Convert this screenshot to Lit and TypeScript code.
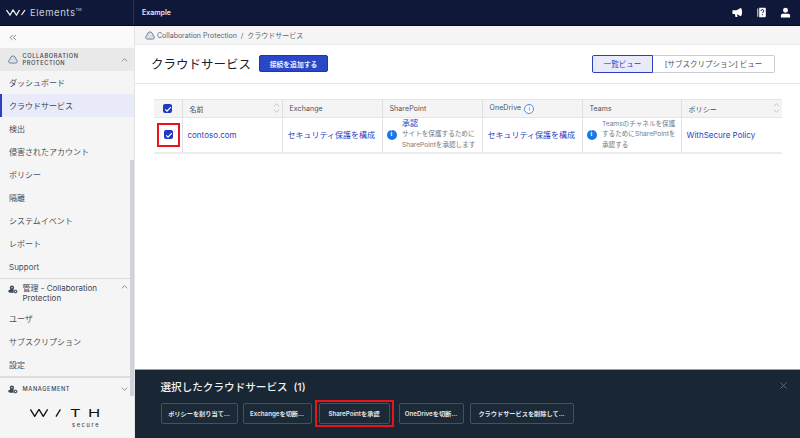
import { LitElement, html, css } from "lit";
import { customElement } from "lit/decorators.js";

const cloud = (w = 10, h = 9) => html`<svg class="ic" viewBox="0 0 14 12" width=${w} height=${h}><path d="M3.400 11C1.800 11 .8 10 .8 8.600c0-1.300.8-2.200 1.900-2.400C3 3 4.800 1 7 1c2.300 0 4 2 4.300 5.200 1.100.2 1.900 1.100 1.900 2.400C13.200 10 12.200 11 10.600 11Z" fill="#d9deec" stroke="#5b6472" stroke-width="1.100"/></svg>`;
const gearCloud = html`<svg class="ic" viewBox="0 0 14 12" width="10" height="9"><circle cx="5.500" cy="3.500" r="3" fill="#3f4956"/><circle cx="5.500" cy="3.500" r="1" fill="#f5f5f5"/><path d="M3 10.500c-1.500 0-2.600-.8-2.600-2 0-1 .8-1.800 1.800-1.800.5-1.500 1.700-2.200 3-2.200 1.600 0 2.800 1 3 2.500 1.500 0 2.700.7 2.700 1.900s-1 1.600-2.200 1.600Z" fill="#3f4956"/><circle cx="10.500" cy="8.700" r="2.800" fill="#3f4956" stroke="#f5f5f5" stroke-width=".6"/><circle cx="10.500" cy="8.700" r=".9" fill="#f5f5f5"/></svg>`;
const chevUp = html`<svg viewBox="0 0 10 6" width="7" height="4"><path d="M1 5l4-4 4 4" fill="none" stroke="#5b6472" stroke-width="1"/></svg>`;
const chevDown = html`<svg viewBox="0 0 10 6" width="7" height="4"><path d="M1 1l4 4 4-4" fill="none" stroke="#5b6472" stroke-width="1"/></svg>`;
const topMark = html`<svg viewBox="0 0 40 14" width="20" height="7"><path d="M1 2l7 10 6-10 7 10 6-10M31 12l7-10" fill="none" stroke="#f0f1f5" stroke-width="2.600"/></svg>`;
const logoMark = html`<svg viewBox="0 0 31 8" width="31" height="8"><path d="M.4 .4l4.300 7 4.300-7 4.300 7 4.300-7M26 7.600l4.400-7.200" fill="none" stroke="#111" stroke-width="1.300"/></svg>`;
const check = html`<span class="cb"><svg viewBox="0 0 10 10" width="8" height="8"><path d="M1.500 5.500l2.300 2.200 4.700-5" fill="none" stroke="#fff" stroke-width="1.600"/></svg></span>`;
const info = html`<span class="info">i</span>`;
const sort = html`<span class="sort"><svg viewBox="0 0 8 4" width="7" height="4"><path d="M1 3.500l3-3 3 3" fill="none" stroke="#b5bac2" stroke-width=".9"/></svg><svg viewBox="0 0 8 4" width="7" height="4"><path d="M1 .5l3 3 3-3" fill="none" stroke="#b5bac2" stroke-width=".9"/></svg></span>`;

const items1 = ["ダッシュボード", "クラウドサービス", "検出", "侵害されたアカウント", "ポリシー", "隔離", "システムイベント", "レポート", "Support"];
const items2 = ["ユーザ", "サブスクリプション", "設定"];
const actions = ["ポリシーを割り当て...", "Exchangeを切断...", "SharePointを承認", "OneDriveを切断...", "クラウドサービスを削除して..."];

@customElement("app-root")
export class AppRoot extends LitElement {
  static styles = css`
    :host { display: grid; grid-template-rows: 26px 412px; width: 800px; height: 438px; overflow: hidden;
      font-family: Inter, "Noto Sans CJK JP", sans-serif; color: #3c4450; background: #fff; }
    * { box-sizing: border-box; }
    .top { display: flex; align-items: center; background: #10183a; border-bottom: 1px solid #060a1c; color: #e8eaf0; }
    .brand { width: 134px; height: 25px; display: flex; align-items: center; gap: 4px; padding-left: 6px; border-right: 1px solid #283256; font-size: 9.500px; letter-spacing: .55px; color: #c9cdd8; }
    .brand sup { font-size: 4px; margin-left: -4px; align-self: flex-start; margin-top: 7px; letter-spacing: 0; }
    .example { padding-left: 8px; font-size: 7px; font-weight: 600; flex: 1; }
    .topicons { display: flex; gap: 13px; align-items: center; padding-right: 9px; }
    .body { display: grid; grid-template-columns: 135px 1fr; min-height: 0; }
    .side { position: relative; background: #f5f5f5; border-right: 1px solid #e3e4e6; display: flex; flex-direction: column; overflow: hidden; }
    .scroll { position: absolute; right: 0; top: 134px; width: 4px; height: 236px; background: #cfd3d8; }
    .collapse { height: 22px; flex: none; display: flex; align-items: center; padding-left: 9px; background: #fafafa; }
    .ghead { display: flex; gap: 4.500px; align-items: center; padding: 0 6px 0 8px; background: #e9e9e9; height: 23px; flex: none; font-size: 5.700px; font-weight: 500; letter-spacing: .6px; line-height: 6.500px; color: #3c4450; }
    .ghead .lbl { flex: 1; }
    .ghead.plain { background: transparent; }
    .ghead.admin { height: 29px; font-size: 8px; letter-spacing: 0; line-height: 10px; font-weight: 400; border-top: 1px solid #d9dadc; align-items: flex-start; padding-top: 4px; }
    .ghead.admin svg { margin-top: 2px; }
    .ghead.mg { height: 24px; border-top: 2px solid #dcdddf; }
    .item { height: 23px; flex: none; display: flex; align-items: center; padding-left: 9px; font-size: 8px; color: #4a515c; }
    .item.on { background: #e9ebfb; border-left: 2px solid #2b3fbf; padding-left: 7px; color: #3c4450; }
    .logo { margin-top: 7px; padding: 0 0 0 30px; }
    .logo .row { display: flex; align-items: center; font-size: 11px; color: #111; line-height: 12px; font-weight: 400; }
    .logo .t, .logo .h { display: inline-block; transform: scaleX(1.5); transform-origin: left center; }
    .logo .t { margin-left: 9px; width: 18px; }
    .logo .sec { margin: 2px 0 0 42px; font-size: 5.500px; letter-spacing: 1.700px; color: #444; line-height: 8px; font-weight: 500; }
    .main { display: flex; flex-direction: column; min-width: 0; }
    .crumb { height: 19px; flex: none; background: #f5f5f5; border-bottom: 1px solid #ebebeb; display: flex; align-items: center; gap: 2px; padding-left: 10px; font-size: 7px; color: #5b6472; }
    .head { height: 39px; flex: none; display: flex; align-items: center; padding: 0 25px 1px 16px; border-bottom: 1px solid #e6e6e6; }
    h1 { margin: 0; font-size: 12.500px; font-weight: 400; color: #1b2029; white-space: nowrap; }
    .add { margin-left: 8px; height: 17px; width: 69px; border: 1px solid #1f34b0; border-radius: 2px; background: #2a47c8; color: #e9ecfb; font: 600 6.800px Inter, "Noto Sans CJK JP", sans-serif; padding: 0; }
    .seg { margin-left: auto; display: flex; height: 18px; font-size: 7.500px; }
    .seg span { display: flex; align-items: center; justify-content: center; }
    .seg .a { width: 61px; background: #e9ebfb; border: 1px solid #2b3fbf; border-radius: 2px 0 0 2px; color: #2b3fbf; }
    .seg .b { width: 122px; border: 1px solid #c9ccd2; border-left: none; border-radius: 0 2px 2px 0; color: #4a515c; }
    table { margin: 15px 0 0 19px; width: 628px; border-collapse: collapse; table-layout: fixed; font-size: 7.500px; }
    th { height: 18px; background: #f4f4f4; border-top: 1px solid #e6e6e6; border-bottom: 1px solid #e6e6e6; border-left: 1px solid #dfe0e3; font-weight: 400; text-align: left; padding: 0 7px; color: #4a515c; position: relative; font-size: 7px; letter-spacing: .1px; }
    th:first-child, td:first-child { border-left: none; padding: 0; text-align: center; }
    td { height: 35px; border-bottom: 2px solid #ececec; border-left: 1px solid #e1e2e5; padding: 0 5px; vertical-align: middle; }
    .lnk { color: #2b3fbf; font-size: 8px; }
    .sort { position: absolute; right: 2px; top: 3px; display: flex; flex-direction: column; gap: 2px; }
    .cb { display: inline-flex; width: 9px; height: 9px; background: #2039c2; border-radius: 2px; align-items: center; justify-content: center; vertical-align: middle; }
    .red { display: inline-flex; width: 23px; height: 24px; margin-left: 2px; align-items: center; justify-content: center; border: 2px solid #e8141c; }
    .info { display: inline-flex; flex: none; width: 10px; height: 10px; border-radius: 50%; background: #1976e6; color: #fff; font-size: 6.500px; font-weight: 700; align-items: center; justify-content: center; }
    .info.o { background: #fff; border: 1px solid #4a90e2; color: #4a90e2; margin-left: 3px; width: 10px; height: 10px; font-weight: 500; vertical-align: -1.500px; }
    .note { display: flex; align-items: center; gap: 5.500px; margin-left: -1px; font-size: 6.600px; line-height: 10.800px; color: #757b85; }
    .note .lnk { display: block; font-size: 8px; line-height: 11px; }
    .spacer { flex: 1; }
    .panel { height: 69px; flex: none; background: #192633; border-top: 1px solid #9a9fa5; padding: 10px 9px 0 25.500px; position: relative; color: #f0f2f5; }
    .panel h2 { margin: 0 0 8px; font-size: 10.600px; font-weight: 500; line-height: 15px; word-spacing: 3px; }
    .close { position: absolute; right: 13px; top: 12px; }
    .btns { display: flex; gap: 5px; }
    .btn { height: 21px; flex: none; display: flex; align-items: center; justify-content: center; border: 1px solid #405264; border-radius: 2px; font-size: 6.200px; font-weight: 600; color: #e4e7eb; white-space: nowrap; background: #1c2a37; }
    .btn:nth-child(1) { width: 77px; }
    .btn:nth-child(2) { width: 69px; }
    .btn:nth-child(3) { width: 71px; margin: 0 4px 0 2px; position: relative; }
    .btn:nth-child(4) { width: 65px; }
    .btn:nth-child(5) { width: 104px; margin-left: 1px; }
    .btn:nth-child(3)::after { content: ""; position: absolute; inset: -4px -5px -4px -5px; border: 2.500px solid #e8141c; pointer-events: none; }
  `;
  render() {
    return html`
      <div class="top">
        <div class="brand">${topMark}<span>Elements</span><sup>TM</sup></div>
        <div class="example">Example</div>
        <div class="topicons">
          <svg viewBox="0 0 12 12" width="11" height="11"><path d="M.5 3.500h4.500L9.500 1c.8 0 1.500 2 1.500 4.500S10.300 10 9.500 10L5.500 7.800l.5 3H3.800L3.200 7.500H.5Z" fill="#fff"/></svg>
          <svg viewBox="0 0 12 12" width="11" height="11"><path d="M1.500 1.500h1v9h-1ZM3.500 .8h6.200c.7 0 1 .3 1 1v8.400c0 .7-.3 1-1 1H3.500Z" fill="#fff"/><path d="M5.500 4.300c0-2 3-2 3 0 0 1.100-1.500 1.200-1.500 2.300M7 7.800v1.200" fill="none" stroke="#10183a" stroke-width="1"/></svg>
          <svg viewBox="0 0 12 12" width="11" height="11"><circle cx="6" cy="3.500" r="2.700" fill="#fff"/><path d="M2.500 7.300h7l1.500 1.200v3H1v-3Z" fill="#fff"/></svg>
        </div>
      </div>
      <div class="body">
        <div class="side">
          <div class="collapse"><svg viewBox="0 0 10 8" width="8" height="7"><path d="M4.500 1L1.500 4l3 3M8.500 1l-3 3 3 3" fill="none" stroke="#5b6472" stroke-width="1"/></svg></div>
          <div class="ghead">${cloud()}<span class="lbl">COLLABORATION<br />PROTECTION</span>${chevUp}</div>
          ${items1.map((t, i) => html`<div class="item ${i === 1 ? "on" : ""}">${t}</div>`)}
          <div class="ghead plain admin">${gearCloud}<span class="lbl">管理 - Collaboration<br />Protection</span>${chevUp}</div>
          ${items2.map((t) => html`<div class="item">${t}</div>`)}
          <div class="ghead plain mg">${gearCloud}<span class="lbl">MANAGEMENT</span>${chevDown}</div>
          <div class="logo">
            <div class="row">${logoMark}<span class="t">T</span><span class="h">H</span></div>
            <div class="sec">secure</div>
          </div>
          <div class="scroll"></div>
        </div>
        <div class="main">
          <div class="crumb">${cloud()}<span>Collaboration Protection&nbsp;&nbsp;/&nbsp;&nbsp;クラウドサービス</span></div>
          <div class="head">
            <h1>クラウドサービス</h1>
            <button class="add">接続を追加する</button>
            <div class="seg"><span class="a">一覧ビュー</span><span class="b">[サブスクリプション] ビュー</span></div>
          </div>
          <table>
            <colgroup><col style="width:28px" /><col style="width:100px" /><col style="width:100px" /><col style="width:100px" /><col style="width:100px" /><col style="width:99px" /><col style="width:101px" /></colgroup>
            <thead><tr>
              <th>${check}</th><th>名前${sort}</th><th>Exchange</th><th>SharePoint</th><th>OneDrive<span class="info o">i</span></th><th>Teams</th><th>ポリシー${sort}</th>
            </tr></thead>
            <tbody><tr>
              <td><span class="red">${check}</span></td>
              <td><span class="lnk">contoso.com</span></td>
              <td><span class="lnk">セキュリティ保護を構成</span></td>
              <td><div class="note">${info}<div><span class="lnk">承認</span>サイトを保護するために<br />SharePointを承認します</div></div></td>
              <td><span class="lnk">セキュリティ保護を構成</span></td>
              <td><div class="note">${info}<div>Teamsのチャネルを保護<br />するためにSharePointを<br />承認する</div></div></td>
              <td><span class="lnk">WithSecure Policy</span></td>
            </tr></tbody>
          </table>
          <div class="spacer"></div>
          <div class="panel">
            <h2>選択したクラウドサービス (1)</h2>
            <svg class="close" viewBox="0 0 8 8" width="7" height="7"><path d="M.5.5l7 7M7.500.5l-7 7" stroke="#67727e" stroke-width="1"/></svg>
            <div class="btns">${actions.map((a) => html`<div class="btn">${a}</div>`)}</div>
          </div>
        </div>
      </div>
    `;
  }
}
